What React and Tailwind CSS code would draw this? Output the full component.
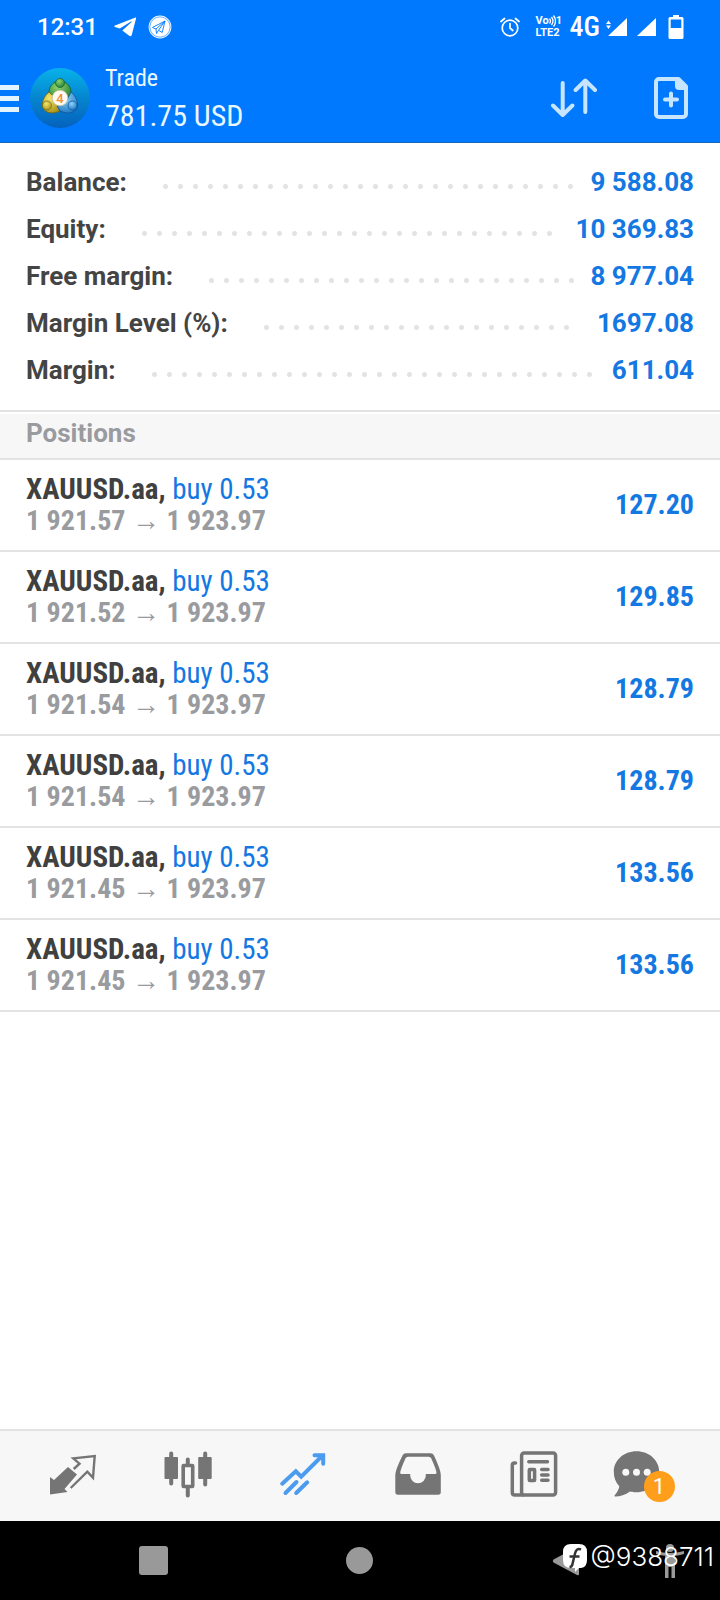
import React, { useState } from 'react';

const summary = [
  { label: 'Balance:', value: '9 588.08' },
  { label: 'Equity:', value: '10 369.83' },
  { label: 'Free margin:', value: '8 977.04' },
  { label: 'Margin Level (%):', value: '1697.08' },
  { label: 'Margin:', value: '611.04' },
];

const positions = [
  { id: 1, symbol: 'XAUUSD.aa', side: 'buy 0.53', open: '1 921.57', current: '1 923.97', profit: '127.20' },
  { id: 2, symbol: 'XAUUSD.aa', side: 'buy 0.53', open: '1 921.52', current: '1 923.97', profit: '129.85' },
  { id: 3, symbol: 'XAUUSD.aa', side: 'buy 0.53', open: '1 921.54', current: '1 923.97', profit: '128.79' },
  { id: 4, symbol: 'XAUUSD.aa', side: 'buy 0.53', open: '1 921.54', current: '1 923.97', profit: '128.79' },
  { id: 5, symbol: 'XAUUSD.aa', side: 'buy 0.53', open: '1 921.45', current: '1 923.97', profit: '133.56' },
  { id: 6, symbol: 'XAUUSD.aa', side: 'buy 0.53', open: '1 921.45', current: '1 923.97', profit: '133.56' },
];

/* ---------- Status bar ---------- */

const StatusBar = () => (
  <div className="flex h-[54px] items-center pr-9 pl-[37px] text-white">
    <span className="text-2xl font-medium">12:31</span>
    <svg viewBox="0 0 22 20" className="ml-4 h-5 w-[22px]" fill="currentColor">
      <path d="M21.5.6 1 8.4c-1 .4-.9 1.2 0 1.500l4.800 1.600L17 4.500c.6-.3 1 0 .6.400l-9.300 8.500 6.900 5.400c1.300.9 2.300.5 2.600-1L22 1.800c.1-1-.1-1.300-.5-1.200z" />
    </svg>
    <svg viewBox="0 0 24 24" className="ml-3 h-6 w-6">
      <circle cx="12" cy="12" r="11.400" fill="#fff" />
      <circle cx="12" cy="12" r="10.200" fill="none" stroke="#0079ff" strokeWidth=".6" />
      <path d="M17 6 4.500 12.500l3.500 1.500.5 4.500 2-3.200 3.700 2.200zM17 6l-9 8M17 6l-6.500 9.300" fill="none" stroke="#0079ff" strokeWidth=".9" strokeLinejoin="round" />
    </svg>

    <div className="ml-auto flex items-center">
      <svg viewBox="0 0 20 20" className="h-5 w-5" fill="none" stroke="currentColor" strokeWidth="1.700" strokeLinecap="round">
        <circle cx="10" cy="11" r="7.800" />
        <path d="M10 6.500V11l2.800 2.500M1 4.500 4.500 1.500M19 4.500 15.500 1.500" />
      </svg>
      <div className="ml-4 w-7 text-[11px] leading-3 font-bold">
        <div className="flex items-center">
          Vo
          <svg viewBox="0 0 7 12" className="h-3 w-[7px] shrink-0" fill="none" stroke="currentColor" strokeWidth="1.300">
            <path d="M.5 3.500q2 2.500 0 5M2.500 2q3 4 0 8M4.500.5q4 5.500 0 11" />
          </svg>
          1
        </div>
        <div>LTE2</div>
      </div>
      <span className="ml-1.5 font-['Roboto_Condensed','Roboto',sans-serif] text-[28px] leading-8 font-medium">4G</span>
      <svg viewBox="0 0 21 20" className="ml-1.5 h-5 w-[21px]" fill="currentColor">
        <path d="M21 1v18H2zM0 7l2.500-3.500L5 7zM0 8.500h5L2.500 12z" />
      </svg>
      <svg viewBox="0 0 19 20" className="ml-2.5 h-5 w-[19px]" fill="currentColor">
        <path d="M19 1v18H0z" />
      </svg>
      <svg viewBox="0 0 16 24" className="ml-3 h-6 w-4" fill="currentColor">
        <path fillRule="evenodd" d="M5 0h6v2h3a1.500 1.500 0 0 1 1.500 1.500v19A1.500 1.500 0 0 1 14 24H2a1.500 1.500 0 0 1-1.500-1.500v-19A1.500 1.500 0 0 1 2 2h3zM2.700 4.500V13h10.600V4.500z" />
      </svg>
    </div>
  </div>
);

/* ---------- App bar ---------- */

const AppLogo = () => (
  <svg viewBox="0 0 60 60" className="h-[60px] w-[60px]">
    <defs>
      <linearGradient id="disc" x1="0" y1="0" x2="0" y2="1">
        <stop offset="0" stopColor="#08b2ea" />
        <stop offset=".5" stopColor="#0585cf" />
        <stop offset="1" stopColor="#0562bd" />
      </linearGradient>
      <radialGradient id="green" cx=".4" cy=".3" r=".8">
        <stop offset="0" stopColor="#8fd46a" />
        <stop offset="1" stopColor="#1c7a35" />
      </radialGradient>
      <radialGradient id="yellow" cx=".4" cy=".3" r=".8">
        <stop offset="0" stopColor="#f4e66a" />
        <stop offset="1" stopColor="#a58d14" />
      </radialGradient>
      <radialGradient id="blue" cx=".4" cy=".3" r=".8">
        <stop offset="0" stopColor="#8fd3fa" />
        <stop offset="1" stopColor="#1470bd" />
      </radialGradient>
    </defs>
    <circle cx="30" cy="30" r="30" fill="url(#disc)" />
    <path d="M19 28c-1-9 4-15 11-15s12 6 11 15l-6 4H25z" fill="url(#green)" stroke="#15602c" strokeWidth=".8" />
    <path d="M19 24c-5 4-8 11-6 16 3 6 11 6 17 3l-1-9z" fill="url(#yellow)" stroke="#6e6416" strokeWidth=".8" />
    <path d="M41 24c5 4 8 11 6 16-3 6-11 6-17 3l-3-5 9-4z" fill="url(#blue)" stroke="#10539a" strokeWidth=".8" />
    <circle cx="30" cy="15" r="4.500" fill="url(#green)" stroke="#15602c" strokeWidth=".7" />
    <circle cx="17" cy="37.500" r="4.500" fill="url(#yellow)" stroke="#6e6416" strokeWidth=".7" />
    <circle cx="42.500" cy="37.500" r="4.500" fill="url(#blue)" stroke="#10539a" strokeWidth=".7" />
    <circle cx="30" cy="30" r="7.800" fill="#fffaf2" stroke="#c9bfa0" strokeWidth=".8" />
    <text x="30" y="34.500" textAnchor="middle" fontSize="13" fontWeight="500" fill="#f08a3c" fontFamily="Roboto, sans-serif">4</text>
  </svg>
);

const AppBar = () => (
  <div className="flex h-[88px] items-center pr-8">
    <button aria-label="Open menu" className="flex h-[27px] w-[19px] flex-col justify-between">
      <span className="h-[5px] w-full bg-[#e3f4ff]" />
      <span className="h-[5px] w-full bg-[#e3f4ff]" />
      <span className="h-[5px] w-full bg-[#e3f4ff]" />
    </button>
    <div className="ml-[11px]">
      <AppLogo />
    </div>
    <div className="ml-[15px] font-['Roboto_Condensed','Roboto',sans-serif] text-[#e9f8ff]">
      <h1 className="text-2xl leading-9">Trade</h1>
      <p className="text-[30px] leading-10">781.75 USD</p>
    </div>
    <button aria-label="Sort positions" className="ml-auto text-[#c8e5ff]">
      <svg viewBox="0 0 46 40" className="h-10 w-[46px]" fill="none" stroke="currentColor" strokeWidth="4" strokeLinecap="round" strokeLinejoin="round">
        <path d="M11.700 5v31M2 27.500l9.700 9.500 9.700-9.500M34.300 34V4M24.600 12l9.700-9.500L44 12" />
      </svg>
    </button>
    <button aria-label="New order" className="ml-[57px] text-[#c8e5ff]">
      <svg viewBox="0 0 34 42" className="h-[42px] w-[34px]">
        <path d="M5 2h19.500L32 9.500V37a3 3 0 0 1-3 3H5a3 3 0 0 1-3-3V5a3 3 0 0 1 3-3z" fill="none" stroke="currentColor" strokeWidth="4" strokeLinejoin="round" />
        <path d="M21 2v7q0 4 4 4h7V9l-7-7z" fill="currentColor" />
        <path d="M17 16.500v12M11 22.500h12" stroke="currentColor" strokeWidth="4" strokeLinecap="round" />
      </svg>
    </button>
  </div>
);

/* ---------- Account summary ---------- */

const SummaryRow = ({ label, value }) => (
  <div className="flex h-[47px] items-center text-[26px] font-bold">
    <dt className="text-[#444]">{label}</dt>
    <div aria-hidden="true" className="mt-2 mr-2.5 ml-[31px] flex-1">
      <div className="h-[5px] w-[round(down,100%,15px)] bg-[radial-gradient(circle,#e3e3e3_2px,transparent_3px)] bg-[length:15px_5px]" />
    </div>
    <dd className="text-[#1478e2]">{value}</dd>
  </div>
);

/* ---------- Positions ---------- */

const PositionRow = ({ position }) => (
  <li className="flex h-[92px] items-center justify-between border-b-2 border-[#e3e3e3] px-[26px] font-['Roboto_Condensed','Roboto',sans-serif] text-[28px] leading-8">
    <div>
      <p className="text-[29px] leading-8">
        <span className="font-bold text-[#404040]">{position.symbol},</span>{' '}
        <span className="text-[#1478e2]">{position.side}</span>
      </p>
      <p className="font-bold text-[#999b9f]">
        {position.open} <span className="font-['Liberation_Sans',sans-serif] font-normal">→</span> {position.current}
      </p>
    </div>
    <span className="font-bold text-[#1478e2]">{position.profit}</span>
  </li>
);

/* ---------- Bottom tabs ---------- */

const QuotesIcon = () => (
  <svg viewBox="0 0 48 48" className="h-12 w-12">
    <path d="M1 25l4 3L19 15l9 7.500L15.500 37l3 3L1 42.500z" fill="currentColor" />
    <path d="M24.700 17l5.800-5.300-6.200-5.400L45.700 4 44 25.700l-5.700-6L21.700 36" fill="none" stroke="currentColor" strokeWidth="2.400" />
  </svg>
);

const ChartIcon = () => (
  <svg viewBox="0 0 48 48" className="h-12 w-12 overflow-visible">
    <g fill="currentColor">
      <rect x=".5" y="5" width="13.500" height="22" rx="1" />
      <rect x="34.200" y="5" width="13.500" height="22" rx="1" />
    </g>
    <path d="M7.200 1.500v30M41.200 1.500v31M23.800 7.500v5M23.800 35v8.500" stroke="currentColor" strokeWidth="4" strokeLinecap="round" />
    <rect x="19.200" y="13.500" width="9.500" height="21" rx=".5" fill="none" stroke="currentColor" strokeWidth="3.600" />
  </svg>
);

const TradeIcon = () => (
  <svg viewBox="0 0 48 48" className="h-12 w-12" fill="none" stroke="currentColor" strokeWidth="4" strokeLinecap="round">
    <path d="M3.200 31.700l13.600-12.400 5.400 5.400L43 4M35.500 3.200h8.700v8.500M6.500 41l11-11M17.200 41l11-10.700" />
  </svg>
);

const HistoryIcon = () => (
  <svg viewBox="0 0 48 48" className="h-12 w-12" fill="currentColor">
    <path fillRule="evenodd" d="M12 1.300h24.500q2.500 0 3.500 2.200 6.800 14.500 6.800 19.500v17a2.700 2.700 0 0 1-2.700 2.700H4a2.700 2.700 0 0 1-2.700-2.700V23q0-5 7.200-19.500 1-2.200 3.500-2.200zM14 4.700q-1.800 0-2.500 1.500-5.300 12-5.300 14.500 0 1.300 1.300 1.300h8.700v1.500a7.800 7.800 0 0 0 15.600 0V22h9.400q1.300 0 1.300-1.300 0-2.500-5.300-14.500-.7-1.500-2.500-1.500z" />
  </svg>
);

const NewsIcon = () => (
  <svg viewBox="0 0 48 48" className="h-12 w-12 overflow-visible" fill="none" stroke="currentColor" strokeWidth="3.500" strokeLinecap="round">
    <rect x="12.600" y="1" width="34" height="42" rx="2.500" />
    <path d="M6.500 11H5.500q-2.200 0-2.200 2.200v27.300q0 2.500 2.500 2.500h8M19.800 9.700h18.700M32.700 17.500h6.300M32.700 22.900h6.300M32.700 28.300h6.300" />
    <rect x="20.300" y="17.500" width="5.300" height="11" rx=".5" />
  </svg>
);

const MailboxIcon = () => (
  <svg viewBox="0 0 48 48" className="h-12 w-12 overflow-visible">
    <path d="M22.500-.7c12.700 0 22.700 9 22.700 20.500s-10 20.500-22.700 20.500c-2.500 0-4.500-.2-6.500-.8-4.500 3.500-10 5-14.500 5-1 0-1.300-.9-.6-1.600C3.500 40.300 5 37 5.300 34.300 1.700 30.700-.2 25.500-.2 19.800-.2 8.300 9.800-.7 22.500-.7z" fill="currentColor" />
    <circle cx="11.800" cy="20.300" r="3.500" fill="#f7f7f7" />
    <circle cx="22.500" cy="20.300" r="3.500" fill="#f7f7f7" />
    <circle cx="33.200" cy="20.300" r="3.500" fill="#f7f7f7" />
  </svg>
);

const tabs = [
  { id: 'quotes', label: 'Quotes', Icon: QuotesIcon },
  { id: 'chart', label: 'Chart', Icon: ChartIcon },
  { id: 'trade', label: 'Trade', Icon: TradeIcon },
  { id: 'history', label: 'History', Icon: HistoryIcon },
  { id: 'news', label: 'News', Icon: NewsIcon },
  { id: 'mailbox', label: 'Mailbox', Icon: MailboxIcon, badge: 1 },
];

const TabBar = ({ active, onChange }) => (
  <nav className="grid h-[92px] grid-cols-6 border-t-2 border-[#e3e3e3] bg-[#f7f7f7] px-[15px]">
    {tabs.map(({ id, label, Icon, badge }) => (
      <button
        key={id}
        aria-label={label}
        onClick={() => onChange(id)}
        className={`flex items-center justify-center ${active === id ? 'text-[#4b9bef]' : 'text-[#757575]'}`}
      >
        {badge ? (
          <span className="relative w-[68px]">
            <Icon />
            <span className="absolute top-[19px] left-[30px] flex h-[31px] w-[31px] items-center justify-center rounded-full bg-[#ff9e1b] text-[22px] text-white">
              {badge}
            </span>
          </span>
        ) : (
          <Icon />
        )}
      </button>
    ))}
  </nav>
);

/* ---------- System navigation ---------- */

const SystemNav = () => (
  <div className="relative grid h-[79px] grid-cols-3 items-center justify-items-center bg-black px-[50px] text-[#999]">
    <button aria-label="Recent apps" className="h-[29px] w-[29px] rounded-[3px] bg-[#999]" />
    <button aria-label="Home" className="h-[27px] w-[27px] rounded-full bg-[#999]" />
    <button aria-label="Back">
      <svg viewBox="0 0 30 30" className="h-[30px] w-[30px]" fill="currentColor">
        <path d="M1.500 13.500 25 1q2-1 2 1v26q0 2-2 1L1.500 16.500q-1.500-1.500 0-3z" />
      </svg>
    </button>
    <button aria-label="Accessibility" className="absolute top-[23px] right-9">
      <svg viewBox="0 0 28 34" className="h-[34px] w-7" fill="currentColor">
        <circle cx="14" cy="4" r="4" />
        <path d="M0 7q14 4 28 0v3q-5 1.500-9 1.800V34h-3.500V23h-3v11H9V11.800Q5 11.500 0 10z" />
      </svg>
    </button>
    <div className="absolute top-5 right-1.5 flex items-center gap-1 text-white">
      <svg viewBox="0 0 24 30" className="h-[30px] w-6">
        <path d="M8 2h8q8 0 8 8v8q0 7-6 8h-2l-4 4v-4H8q-8 0-8-8v-8q0-8 8-8z" fill="#fff" />
        <path d="M18 7.500q-4.500-2-6 4L9.500 22q-.5 3-3 3M6.500 14.500h10" fill="none" stroke="#333" strokeWidth="2.500" />
      </svg>
      <span className="font-['Inter',sans-serif] text-[26px] leading-8 font-light">@9388711</span>
    </div>
  </div>
);

const App = () => {
  const [activeTab, setActiveTab] = useState('trade');

  return (
    <div className="flex min-h-screen flex-col bg-white font-['Roboto',sans-serif]">
      <header className="border-b border-[#1769b8] bg-[#0079ff]">
        <StatusBar />
        <AppBar />
      </header>

      <main className="flex-1">
        <dl className="px-[26px] py-4">
          {summary.map((row) => (
            <SummaryRow key={row.label} label={row.label} value={row.value} />
          ))}
        </dl>

        <section className="border-t-2 border-[#e3e3e3] pt-0.5">
          <h2 className="h-[46px] border-b-2 border-[#e3e3e3] bg-[#f7f7f7] px-[26px] text-[26px] leading-[38px] font-bold text-[#999b9f]">
            Positions
          </h2>
          <ul>
            {positions.map((position) => (
              <PositionRow key={position.id} position={position} />
            ))}
          </ul>
        </section>
      </main>

      <TabBar active={activeTab} onChange={setActiveTab} />
      <SystemNav />
    </div>
  );
};

export default App;
